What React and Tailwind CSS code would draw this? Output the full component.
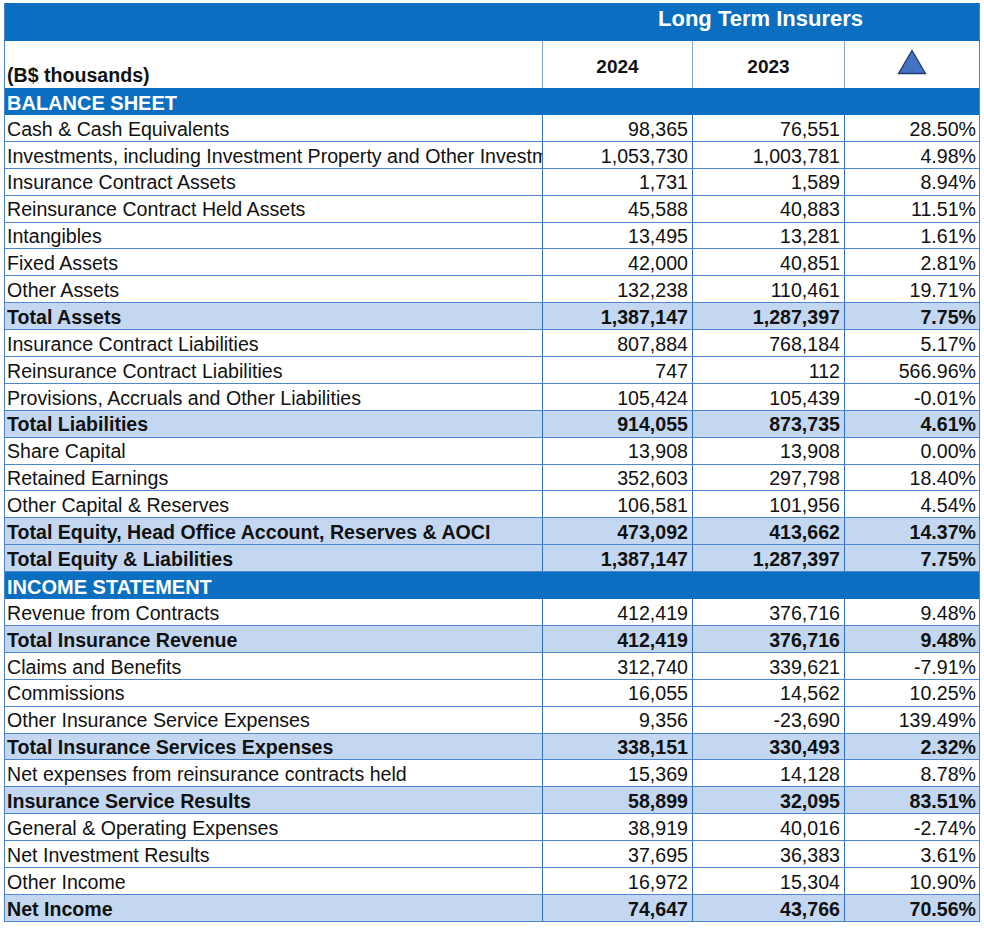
import React from "react";

const balance = [
  ["Cash & Cash Equivalents", "98,365", "76,551", "28.50%"],
  ["Investments, including Investment Property and Other Investments", "1,053,730", "1,003,781", "4.98%"],
  ["Insurance Contract Assets", "1,731", "1,589", "8.94%"],
  ["Reinsurance Contract Held Assets", "45,588", "40,883", "11.51%"],
  ["Intangibles", "13,495", "13,281", "1.61%"],
  ["Fixed Assets", "42,000", "40,851", "2.81%"],
  ["Other Assets", "132,238", "110,461", "19.71%"],
  ["Total Assets", "1,387,147", "1,287,397", "7.75%", true],
  ["Insurance Contract Liabilities", "807,884", "768,184", "5.17%"],
  ["Reinsurance Contract Liabilities", "747", "112", "566.96%"],
  ["Provisions, Accruals and Other Liabilities", "105,424", "105,439", "-0.01%"],
  ["Total Liabilities", "914,055", "873,735", "4.61%", true],
  ["Share Capital", "13,908", "13,908", "0.00%"],
  ["Retained Earnings", "352,603", "297,798", "18.40%"],
  ["Other Capital & Reserves", "106,581", "101,956", "4.54%"],
  ["Total Equity, Head Office Account, Reserves & AOCI", "473,092", "413,662", "14.37%", true],
  ["Total Equity & Liabilities", "1,387,147", "1,287,397", "7.75%", true],
];

const income = [
  ["Revenue from Contracts", "412,419", "376,716", "9.48%"],
  ["Total Insurance Revenue", "412,419", "376,716", "9.48%", true],
  ["Claims and Benefits", "312,740", "339,621", "-7.91%"],
  ["Commissions", "16,055", "14,562", "10.25%"],
  ["Other Insurance Service Expenses", "9,356", "-23,690", "139.49%"],
  ["Total Insurance Services Expenses", "338,151", "330,493", "2.32%", true],
  ["Net expenses from reinsurance contracts held", "15,369", "14,128", "8.78%"],
  ["Insurance Service Results", "58,899", "32,095", "83.51%", true],
  ["General & Operating Expenses", "38,919", "40,016", "-2.74%"],
  ["Net Investment Results", "37,695", "36,383", "3.61%"],
  ["Other Income", "16,972", "15,304", "10.90%"],
  ["Net Income", "74,647", "43,766", "70.56%", true],
];

const cols = "grid grid-cols-[537px_150px_152px_135px]";

const Row = ({ row }) => {
  const [label, a, b, c, total] = row;
  return (
    <div
      className={`${cols} h-[26.9px] border-b border-[#4f86cf] ${
        total ? "bg-[#c3d8f0] font-bold" : "bg-white"
      }`}
    >
      <div className="pl-[2px] pt-[3px] flex items-center overflow-hidden whitespace-nowrap">{label}</div>
      <div className="border-l border-[#2f6cc2] pr-[4px] pt-[3px] flex items-center justify-end">{a}</div>
      <div className="border-l border-[#2f6cc2] pr-[4px] pt-[3px] flex items-center justify-end">{b}</div>
      <div className="border-l border-[#2f6cc2] pr-[3px] pt-[3px] flex items-center justify-end">{c}</div>
    </div>
  );
};

const Band = ({ title }) => (
  <div className="h-[27px] bg-[#0b6fc1] text-white font-bold text-[20px] pl-[2px] pt-[2px] flex items-center">
    {title}
  </div>
);

export default function App() {
  return (
    <div className="bg-white w-[984px] h-[928px] pt-[3px] pl-[4px] font-['Liberation_Sans',Arial,sans-serif] text-[19.6px] leading-none text-[#111]">
      <div className="w-[976px] border-l border-r border-[#4f82c4]">
        {/* title band */}
        <div className={`${cols} h-[38px] bg-[#0b6fc1]`}>
          <div />
          <div className="col-span-3 flex items-center justify-center pb-[7px] text-white font-bold text-[22px]">
            Long Term Insurers
          </div>
        </div>

        {/* header row */}
        <div className={`${cols} h-[47px] bg-white`}>
          <div className="pl-[2px] flex items-end pb-[2px] font-bold">(B$ thousands)</div>
          <div className="border-l border-[#7fa3d4] flex items-center justify-center font-bold text-[19px] pt-[3px]">
            2024
          </div>
          <div className="border-l border-[#7fa3d4] flex items-center justify-center font-bold text-[19px] pt-[3px]">
            2023
          </div>
          <div className="border-l border-[#7fa3d4] flex items-center justify-center pb-[6px]">
            <svg width="30" height="26" viewBox="0 0 30 26">
              <polygon points="1.5,24.5 15,1.5 28.5,24.5" fill="#4472c4" stroke="#1f3a6b" strokeWidth="1.3" />
            </svg>
          </div>
        </div>

        <Band title="BALANCE SHEET" />
        {balance.map((r) => (
          <Row key={r[0]} row={r} />
        ))}

        <Band title="INCOME STATEMENT" />
        {income.map((r) => (
          <Row key={r[0]} row={r} />
        ))}
      </div>
    </div>
  );
}
